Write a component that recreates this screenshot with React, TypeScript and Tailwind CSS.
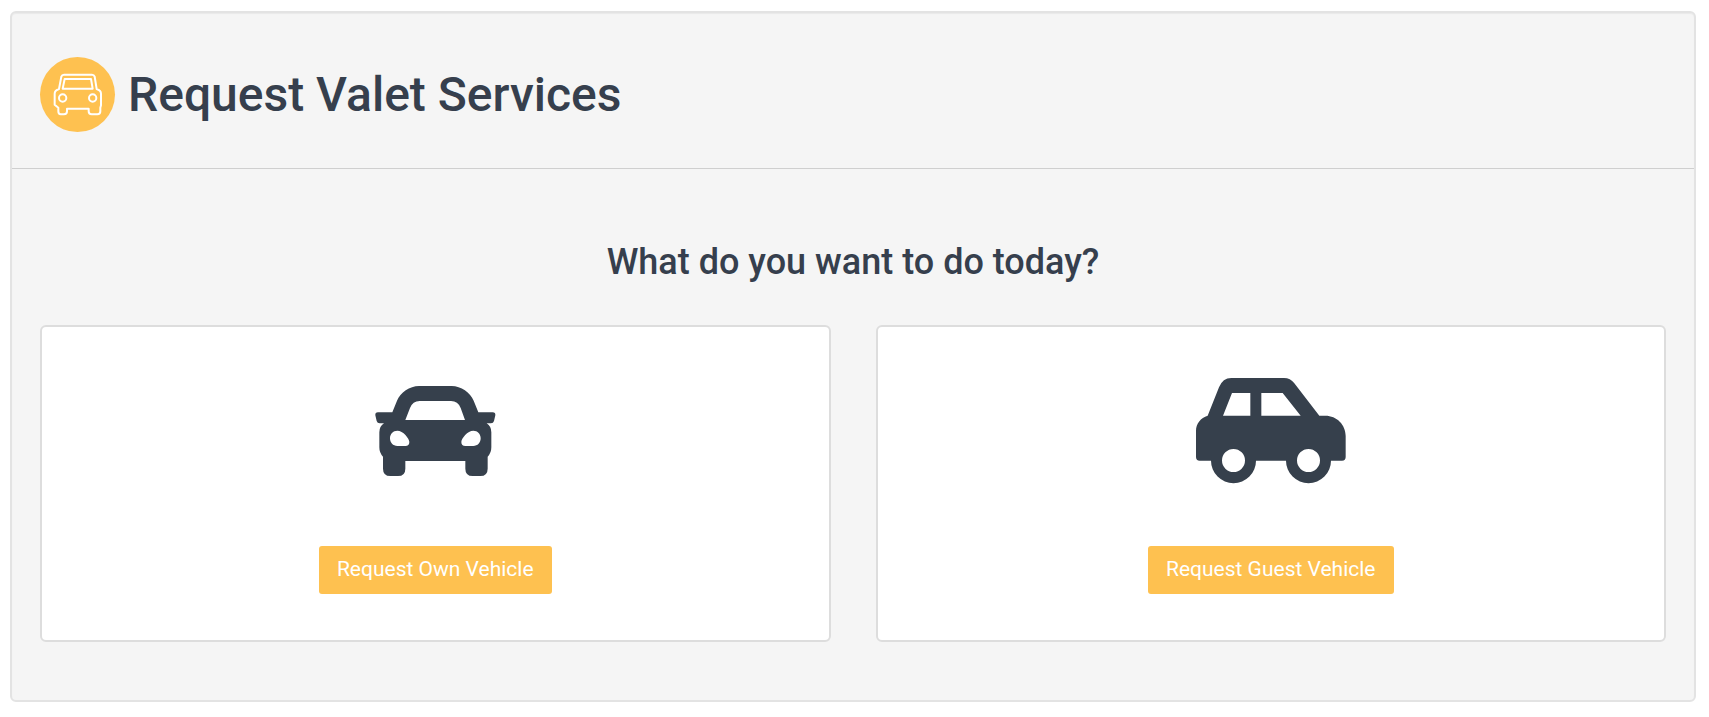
import type { ReactNode } from 'react';

const ValetBadge = () => (
  <span className="flex size-[75px] shrink-0 items-center justify-center rounded-full bg-[#fec150]">
    <svg viewBox="159 219 150 129" className="h-[43px] w-[50px]" fill="none" stroke="#fff" strokeWidth="6" strokeLinejoin="round" aria-hidden="true">
      <path d="M192 224 H276 Q282 224 284 230 L290 267 Q303 271 303 281 V316 L301 323 V334 Q301 343 292 343 H275 Q266 343 266 334 V326 H201 V334 Q201 343 192 343 H182 Q175 343 175 334 V323 L164 314 V281 Q164 271 177 267 L184 230 Q186 224 192 224 Z" />
      <path d="M194 237 H273 L278 266 H188 Z" />
      <circle cx="188" cy="294" r="11" />
      <circle cx="278" cy="294" r="11" />
    </svg>
  </span>
);

const OwnCarIcon = () => (
  <svg viewBox="106 78 360 270" className="h-[90px] w-[120px] overflow-visible" fill="#36404c" fillRule="evenodd" aria-hidden="true">
    <path d="M238 78 H336 C364 78 392 98 402 122 L416 157 H459 Q468 157 467 166 L463 183 Q461 190 454 190 H441 Q455 199 455 217 V262 Q455 279 444 290 V326 Q444 348 422 348 H399 Q377 348 377 326 V303 H197 V326 Q197 348 175 348 H152 Q130 348 130 326 V290 Q119 279 119 262 V217 Q119 199 133 190 H120 Q113 190 111 183 L107 166 Q106 157 115 157 H158 L172 122 C182 98 210 78 238 78 Z M197 180 H376 L363 144 Q355 123 334 123 H240 Q219 123 211 144 Z M173 212 C160 212 151 222 151 235 C151 248 160 258 173 258 H197 Q209 258 209 246 C209 235 190 212 173 212 Z M401 212 C384 212 365 235 365 246 Q365 258 377 258 H401 C414 258 423 248 423 235 C423 222 414 212 401 212 Z" />
  </svg>
);

const GuestCarIcon = () => (
  <svg viewBox="78 55 450 318" className="h-[106px] w-[150px]" fill="#36404c" fillRule="evenodd" aria-hidden="true">
    <path d="M184 55 H342 Q361 55 373 71 L448 168 H466 C500 168 527 195 527 229 V292 Q527 303 516 303 H483 A67.500 67.500 0 0 1 348 303 H258 A67.500 67.500 0 0 1 123 303 H89 Q78 303 78 292 V213 C78 192 92 174 113 168 L147 83 Q158 55 184 55 Z M186 100 L159 168 H241 V100 Z M274 100 V168 H392 L338 100 Z M190.500 268 A34.500 34.500 0 1 0 190.500 337 A34.500 34.500 0 1 0 190.500 268 Z M415.500 268 A34.500 34.500 0 1 0 415.500 337 A34.500 34.500 0 1 0 415.500 268 Z" />
  </svg>
);

const OptionCard = ({ icon, label }: { icon: ReactNode; label: string }) => (
  <div className="flex flex-col items-center rounded-md border-2 border-[#dddddd] bg-white pt-[29px] pb-[46px]">
    <div className="flex h-[150px] items-center justify-center">{icon}</div>
    <button type="button" className="mt-10 h-12 cursor-pointer rounded-[3px] bg-[#fec150] px-[18px] text-[21px] text-white">
      {label}
    </button>
  </div>
);

export default function App() {
  return (
    <div className="min-h-screen bg-white pt-[11px] pr-[13px] pb-[15px] pl-[10px] font-[Roboto,sans-serif] text-[#363f4d]">
      <main className="rounded-md border-2 border-[#e3e3e3] bg-[#f5f5f5] shadow-[inset_0_1px_1px_rgba(0,0,0,0.05)]">
        <header className="flex items-center gap-[13px] border-b border-[#cfcfcf] px-7 pt-11 pb-9">
          <ValetBadge />
          <h1 className="text-5xl leading-[57px] font-medium">Request Valet Services</h1>
        </header>

        <section className="px-7 pt-[71px] pb-[58px]">
          <h2 className="text-center text-4xl leading-[44px] font-medium">What do you want to do today?</h2>
          <div className="mt-[41px] grid grid-cols-2 gap-[45px]">
            <OptionCard icon={<OwnCarIcon />} label="Request Own Vehicle" />
            <OptionCard icon={<GuestCarIcon />} label="Request Guest Vehicle" />
          </div>
        </section>
      </main>
    </div>
  );
}
